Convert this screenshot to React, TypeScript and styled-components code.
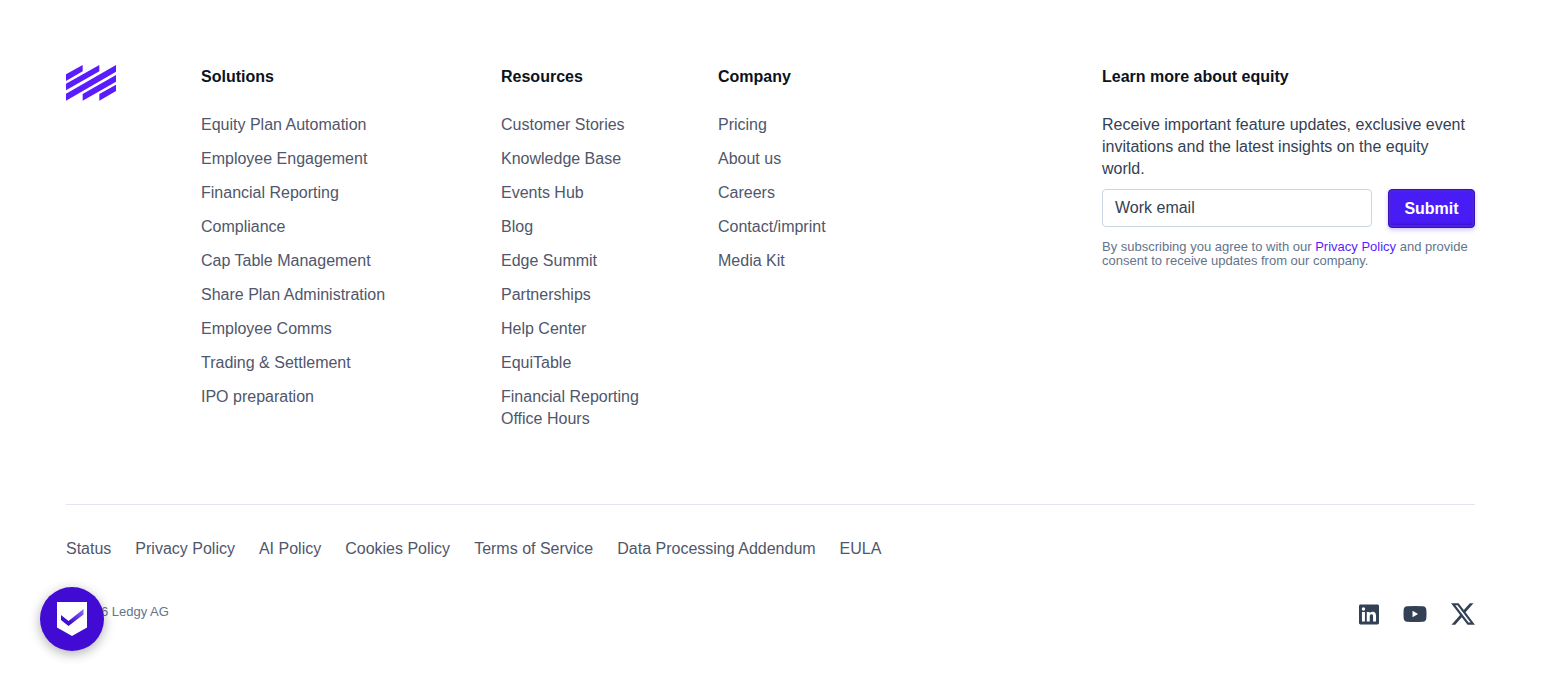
import React from "react";
import styled, { createGlobalStyle } from "styled-components";

const GlobalStyle = createGlobalStyle`
  *, *::before, *::after { box-sizing: border-box; }
  body {
    margin: 0;
    background: #ffffff;
    color: #334155;
    font-family: "Liberation Sans", Arial, sans-serif;
    font-size: 16px;
    line-height: 22px;
  }
`;

const Footer = styled.footer`
  padding: 65px 66px;
`;

const Columns = styled.div`
  display: grid;
  grid-template-columns: 135px 300px 217px 1fr 373px;
  padding-bottom: 74px;
  border-bottom: 1px solid #e2e5ed;
`;

const Logo = styled.svg`
  display: block;
  width: 50px;
  height: 36px;
  fill: #5a1cff;
`;

const Heading = styled.h2`
  margin: 0 0 25px;
  font-size: 16px;
  font-weight: 700;
  line-height: 24px;
  color: #0b1220;
`;

const LinkList = styled.ul`
  display: flex;
  flex-direction: column;
  gap: 12px;
  max-width: 220px;
  margin: 0;
  padding: 0;
  list-style: none;
`;

const NarrowList = styled(LinkList)`
  max-width: 160px;
`;

const FooterLink = styled.a`
  color: #50566b;
  text-decoration: none;
`;

const Intro = styled.p`
  margin: 0 0 9px;
`;

const Form = styled.form`
  display: flex;
  gap: 16px;
`;

const EmailInput = styled.input`
  flex: 1;
  min-width: 0;
  height: 38px;
  padding: 0 12px;
  border: 1px solid #cbd5e1;
  border-radius: 4px;
  background: #ffffff;
  font: inherit;
  color: #334155;
  &::placeholder { color: #334155; opacity: 1; }
`;

const SubmitButton = styled.button`
  width: 87px;
  height: 39px;
  padding: 0;
  border: 1px solid #3a0fc0;
  border-radius: 4px;
  background: #481cf5;
  box-shadow: inset 0 0 0 2px #4b25dc, inset 0 -3px 3px #3a12cf, 0 2px 4px #481cf540;
  color: #ffffff;
  font: inherit;
  font-weight: 700;
`;

const FinePrint = styled.p`
  margin: 12px 0 0;
  font-size: 13px;
  line-height: 14px;
  color: #64748b;
`;

const PolicyLink = styled.a`
  color: #5a1cff;
  text-decoration: none;
`;

const LegalNav = styled.nav`
  display: flex;
  flex-wrap: wrap;
  gap: 24px;
  padding-top: 33px;
`;

const BottomBar = styled.div`
  display: flex;
  justify-content: space-between;
  align-items: flex-start;
  margin-top: 42px;
`;

const Copyright = styled.small`
  font-size: 13px;
  line-height: 20px;
  color: #64748b;
`;

const Social = styled.div`
  display: flex;
  gap: 24px;
`;

const SocialLink = styled.a`
  display: block;
  width: 24px;
  height: 24px;
  color: #334155;
  svg { display: block; width: 100%; height: 100%; fill: currentColor; }
`;

const TrustBadge = styled.button`
  position: fixed;
  left: 40px;
  bottom: 40px;
  width: 64px;
  height: 64px;
  padding: 0;
  border: 0;
  border-radius: 50%;
  background: #410bd3;
  box-shadow: 0 3px 12px #00000050;
  svg { display: block; width: 64px; height: 64px; }
`;

const solutions = [
  "Equity Plan Automation",
  "Employee Engagement",
  "Financial Reporting",
  "Compliance",
  "Cap Table Management",
  "Share Plan Administration",
  "Employee Comms",
  "Trading & Settlement",
  "IPO preparation",
];
const resources = [
  "Customer Stories",
  "Knowledge Base",
  "Events Hub",
  "Blog",
  "Edge Summit",
  "Partnerships",
  "Help Center",
  "EquiTable",
  "Financial Reporting Office Hours",
];
const company = ["Pricing", "About us", "Careers", "Contact/imprint", "Media Kit"];
const legal = [
  "Status",
  "Privacy Policy",
  "AI Policy",
  "Cookies Policy",
  "Terms of Service",
  "Data Processing Addendum",
  "EULA",
];

function LinkColumn({ title, links, narrow }: { title: string; links: string[]; narrow?: boolean }) {
  const List = narrow ? NarrowList : LinkList;
  return (
    <nav aria-label={title}>
      <Heading>{title}</Heading>
      <List>
        {links.map((label) => (
          <li key={label}>
            <FooterLink href="#">{label}</FooterLink>
          </li>
        ))}
      </List>
    </nav>
  );
}

export default function App() {
  return (
    <>
      <GlobalStyle />
      <Footer>
        <Columns>
          <a href="#" aria-label="Ledgy home">
            <Logo viewBox="0 0 150 108">
              <path d="M0 28 50 0v19L0 48zM0 56 100 0v19L0 76zM0 86 150 0v20L0 107zM50 87 150 30v20L50 107zM100 87 150 59v19l-50 29z" />
            </Logo>
          </a>
          <LinkColumn title="Solutions" links={solutions} />
          <LinkColumn title="Resources" links={resources} narrow />
          <LinkColumn title="Company" links={company} />
          <section>
            <Heading>Learn more about equity</Heading>
            <Intro>
              Receive important feature updates, exclusive event invitations and the latest insights on the equity
              world.
            </Intro>
            <Form onSubmit={(e) => e.preventDefault()}>
              <EmailInput type="email" aria-label="Work email" placeholder="Work email" />
              <SubmitButton type="submit">Submit</SubmitButton>
            </Form>
            <FinePrint>
              By subscribing you agree to with our <PolicyLink href="#">Privacy Policy</PolicyLink> and provide consent
              to receive updates from our company.
            </FinePrint>
          </section>
        </Columns>
        <LegalNav aria-label="Legal">
          {legal.map((label) => (
            <FooterLink key={label} href="#">
              {label}
            </FooterLink>
          ))}
        </LegalNav>
        <BottomBar>
          <Copyright>© 2026 Ledgy AG</Copyright>
          <Social>
            <SocialLink href="#" aria-label="LinkedIn">
              <svg viewBox="-4.8 -3 28.8 28.8">
                <path d="M20.447 20.452h-3.554v-5.569c0-1.328-.027-3.037-1.852-3.037-1.853 0-2.136 1.445-2.136 2.939v5.667H9.351V9h3.414v1.561h.046c.477-.9 1.637-1.85 3.37-1.85 3.601 0 4.267 2.37 4.267 5.455v6.286zM5.337 7.433a2.062 2.062 0 1 1 0-4.124 2.062 2.062 0 0 1 0 4.124zm1.782 13.019H3.555V9h3.564v11.452zM22.225 0H1.771C.792 0 0 .774 0 1.729v20.542C0 23.227.792 24 1.771 24h20.451C23.2 24 24 23.227 24 22.271V1.729C24 .774 23.2 0 22.222 0h.003z" />
              </svg>
            </SocialLink>
            <SocialLink href="#" aria-label="YouTube">
              <svg viewBox="0 0 24 24">
                <path
                  fillRule="evenodd"
                  d="M4 4.300Q12 3.700 20 4.300Q23 4.600 23.300 7.500Q23.800 12 23.300 16.500Q23 19.400 20 19.700Q12 20.300 4 19.700Q1 19.400.7 16.500Q.2 12 .7 7.500Q1 4.600 4 4.300ZM9.500 8.800v6.400l5.600-3.200z"
                />
              </svg>
            </SocialLink>
            <SocialLink href="#" aria-label="X">
              <svg viewBox="1.2 1.2 21.700 21.700">
                <path d="M18.244 2.25h3.308l-7.227 8.26 8.502 11.24H16.17l-5.214-6.817L4.99 21.75H1.68l7.73-8.835L1.254 2.25H8.08l4.713 6.231zm-1.161 17.52h1.833L7.084 4.126H5.117z" />
              </svg>
            </SocialLink>
          </Social>
        </BottomBar>
      </Footer>
      <TrustBadge type="button" aria-label="Trust center">
        <svg viewBox="0 0 64 64">
          <defs>
            <linearGradient id="check" x1="0" y1="1" x2="1" y2="0">
              <stop offset="0.3" stopColor="#410bd3" />
              <stop offset="1" stopColor="#8f6cf5" />
            </linearGradient>
          </defs>
          <path d="M17 15h30v25.500L32 49 17 40.500z" fill="#ffffff" />
          <path d="M21 28l7.500 6L43.500 22v5.500L28.500 39 21 33z" fill="url(#check)" />
        </svg>
      </TrustBadge>
    </>
  );
}
